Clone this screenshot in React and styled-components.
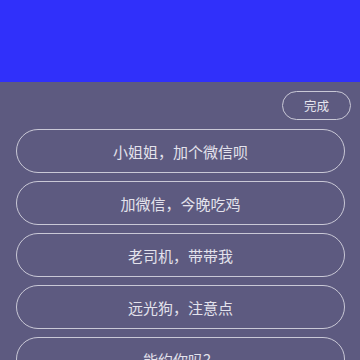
import React from 'react';
import styled, { createGlobalStyle } from 'styled-components';

const Global = createGlobalStyle`
    html, body {
        margin: 0;
        padding: 0;
        background: #5d5a80;
    }
    body {
        font-family: "Noto Sans CJK SC", "Liberation Sans", sans-serif;
    }
`;

const Screen = styled.div`
    width: 360px;
    height: 360px;
    overflow: hidden;
    display: flex;
    flex-direction: column;
    background: #5d5a80;
`;

const Header = styled.div`
    height: 82px;
    flex-shrink: 0;
    background: #3030fa;
`;

const Panel = styled.div`
    display: flex;
    flex-direction: column;
    padding: 9px 15px 0 16px;
`;

const Toolbar = styled.div`
    display: flex;
    justify-content: flex-end;
    margin-bottom: 9px;
    margin-right: -6px;
`;

const DoneButton = styled.button`
    width: 69px;
    height: 29px;
    border: 1.5px solid #c9c8d6;
    border-radius: 15px;
    background: transparent;
    color: #e6e5ee;
    font-family: inherit;
    font-size: 12.5px;
    padding: 0;
    cursor: pointer;
`;

const List = styled.ul`
    list-style: none;
    margin: 0;
    padding: 0;
    display: flex;
    flex-direction: column;
    gap: 8px;
`;

const Phrase = styled.li`
    height: 44px;
    box-sizing: border-box;
    border: 1.5px solid #c9c8d6;
    border-radius: 22px;
    display: flex;
    align-items: center;
    justify-content: center;
    color: #e3e2ec;
    font-size: 15px;
    flex-shrink: 0;
`;

const phrases = [
    '小姐姐，加个微信呗',
    '加微信，今晚吃鸡',
    '老司机，带带我',
    '远光狗，注意点',
    '能约你吗？',
];

export default function App() {
    return (
        <Screen>
            <Global />
            <Header />
            <Panel>
                <Toolbar>
                    <DoneButton>完成</DoneButton>
                </Toolbar>
                <List>
                    {phrases.map(text => <Phrase key={text}>{text}</Phrase>)}
                </List>
            </Panel>
        </Screen>
    );
}
